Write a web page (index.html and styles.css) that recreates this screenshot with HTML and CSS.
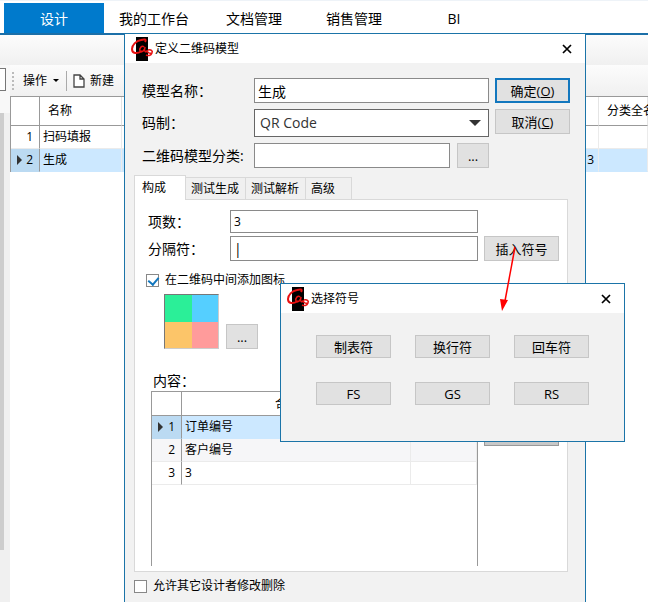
FILE: index.html
```html
<!DOCTYPE html>
<html lang="zh-CN">
<head>
  <meta charset="UTF-8" />
  <meta name="viewport" content="width=device-width, initial-scale=1.0"/>
  <title>定义二维码模型</title>
  <link rel="stylesheet" href="styles.css">
</head>
<body>
  <svg width="0" height="0" class="sprite">
    <symbol id="logo" viewBox="0 0 24 24">
      <rect x="6" y="0" width="12" height="24" fill="#000"/>
      <path d="M15 5C17 2 14 2 11 3C6 4 2 8 2 12C2 17 7 17 12 14" fill="none" stroke="#e81010" stroke-width="2"/>
      <path d="M14 10C12 8 9 11 10 14C12 16 15 13 15 10C14 14 15 16 18 14" fill="none" stroke="#e81010" stroke-width="1.5"/>
      <path d="M18 13C21 12 23 14 22 16C21 19 18 19 16 18M17 13C17 15 19 17 22 16" fill="none" stroke="#e81010" stroke-width="1.5"/>
    </symbol>
    <symbol id="close" viewBox="0 0 10 10">
      <path d="M1 1L9 9M9 1L1 9" fill="none" stroke="#000" stroke-width="1.7"/>
    </symbol>
  </svg>

  <div class="app">
    <nav class="nav">
      <a href="#" class="active">设计</a>
      <a href="#">我的工作台</a>
      <a href="#">文档管理</a>
      <a href="#">销售管理</a>
      <a href="#">BI</a>
    </nav>
    <div class="strip"></div>

    <div class="main">
      <aside class="side">
        <div class="side-top"><div class="side-box"></div></div>
        <div class="scroll"><div class="thumb"></div></div>
      </aside>
      <section class="content">
        <div class="toolbar">
          <span class="grip"></span>
          <button class="tool">操作 <span class="caret"></span></button>
          <span class="sep"></span>
          <button class="tool">
            <svg width="12" height="14" viewBox="0 0 12 14"><path d="M1 1H7L11 5V13H1ZM7 1V5H11" fill="#fff" stroke="#444" stroke-width="1.3"/></svg>
            新建
          </button>
        </div>
        <table class="grid list">
          <colgroup><col class="c-num"><col class="c-name"><col class="c-mid"><col class="c-last"></colgroup>
          <thead>
            <tr><th></th><th>名称</th><th></th><th>分类全名</th></tr>
          </thead>
          <tbody>
            <tr><td class="num">1</td><td>扫码填报</td><td></td><td></td></tr>
            <tr class="selected"><td class="num"><span class="marker"></span>2</td><td>生成</td><td class="right">3</td><td></td></tr>
          </tbody>
        </table>
      </section>
    </div>

    <div class="window model">
      <div class="titlebar">
        <svg class="logo"><use href="#logo"/></svg>
        <span>定义二维码模型</span>
        <button class="close" aria-label="关闭"><svg width="10" height="10"><use href="#close"/></svg></button>
      </div>

      <div class="form">
        <label for="name">模型名称：</label>
        <input type="text" id="name" value="生成" />
        <button class="btn primary">确定(<u>O</u>)</button>

        <label for="code" class="tall">码制：</label>
        <div class="select">
          <select id="code"><option>QR Code</option></select>
        </div>
        <button class="btn">取消(<u>C</u>)</button>

        <label for="category">二维码模型分类:</label>
        <div class="browse">
          <input type="text" id="category" />
          <button class="btn small">...</button>
        </div>
      </div>

      <div class="tabs">
        <button class="tab current">构成</button>
        <button class="tab">测试生成</button>
        <button class="tab">测试解析</button>
        <button class="tab">高级</button>
      </div>

      <div class="panel">
        <div class="fields">
          <label for="count" class="short">项数：</label>
          <input type="text" id="count" value="3" />
          <span></span>
          <label for="separator">分隔符：</label>
          <input type="text" id="separator" value="|" />
          <button class="btn">插入符号</button>
        </div>

        <label class="check"><input type="checkbox" checked /> 在二维码中间添加图标</label>

        <div class="picture">
          <div class="swatches">
            <span class="green"></span><span class="blue"></span>
            <span class="orange"></span><span class="pink"></span>
          </div>
          <button class="btn small">...</button>
        </div>

        <div class="caption">内容：</div>
        <div class="items">
          <div class="items-box">
            <table class="grid">
              <colgroup><col class="c-index"><col><col class="c-extra"></colgroup>
              <thead>
                <tr><th></th><th class="compose">合</th><th></th></tr>
              </thead>
              <tbody>
                <tr class="selected"><td class="num"><span class="marker"></span>1</td><td>订单编号</td><td></td></tr>
                <tr class="alt"><td class="num">2</td><td>客户编号</td><td></td></tr>
                <tr><td class="num">3</td><td>3</td><td></td></tr>
              </tbody>
            </table>
          </div>
          <button class="btn dark" disabled aria-label="项"></button>
        </div>
      </div>

      <label class="check share"><input type="checkbox" /> 允许其它设计者修改删除</label>
    </div>

    <div class="window symbols">
      <div class="titlebar">
        <svg class="logo"><use href="#logo"/></svg>
        <span>选择符号</span>
        <button class="close" aria-label="关闭"><svg width="10" height="10"><use href="#close"/></svg></button>
      </div>
      <div class="keys">
        <button class="btn">制表符</button>
        <button class="btn">换行符</button>
        <button class="btn">回车符</button>
        <button class="btn">FS</button>
        <button class="btn">GS</button>
        <button class="btn">RS</button>
      </div>
    </div>

    <svg class="arrow" width="20" height="66" viewBox="0 0 20 66">
      <path d="M15 1L5 55" stroke="#f00" stroke-width="1.5"/>
      <path d="M0 53L8 54L2 65Z" fill="#f00"/>
    </svg>
  </div>
</body>
</html>
```
FILE: styles.css
```css
* {
  box-sizing: border-box;
}
body {
  margin: 0;
  font-family: "Open Sans", "Noto Sans CJK SC", sans-serif;
  font-size: 12px;
  line-height: 16px;
  color: #000;
  background: #fff;
}
button, input, select {
  font: inherit;
  color: inherit;
  margin: 0;
}
.sprite {
  position: absolute;
}
.app {
  position: relative;
  min-height: 100vh;
  overflow: hidden;
  display: flex;
  flex-direction: column;
}

/* top navigation */
.nav {
  display: flex;
  height: 35px;
  padding: 2px 4px 0;
  border-top: 1px solid #eef3f8;
  border-bottom: 2px solid #1b6fa8;
}
.nav a {
  width: 100px;
  font-size: 14px;
  line-height: 31px;
  text-align: center;
  color: #000;
  text-decoration: none;
}
.nav .active {
  background: #007acc;
  color: #fff;
}
.strip {
  height: 30px;
  background: linear-gradient(#fcfcfc, #f0f0f0);
}

/* page behind the windows */
.main {
  display: flex;
  flex: 1;
}
.side {
  width: 10px;
  display: flex;
  flex-direction: column;
  background: #f0f0f0;
}
.side-top {
  height: 48px;
  padding-top: 3px;
  background: #f8f8f8;
}
.side-box {
  width: 6px;
  height: 23px;
  background: #fff;
  border: 1px solid #777;
  border-left: none;
}
.scroll {
  flex: 1;
  padding-bottom: 52px;
  display: flex;
}
.thumb {
  width: 4px;
  background: #cdcdcd;
}
.content {
  flex: 1;
  min-width: 0;
  overflow: hidden;
}
.toolbar {
  display: flex;
  align-items: center;
  height: 31px;
  padding-left: 2px;
  background: linear-gradient(#fcfcfc, #f0f0f0);
}
.grip {
  height: 18px;
  border-left: 2px dotted #bbb;
}
.tool {
  display: flex;
  align-items: center;
  gap: 6px;
  padding: 0 7px 0 9px;
  border: none;
  background: none;
}
.sep {
  height: 20px;
  border-left: 1px solid #aaa;
}
.sep + .tool {
  gap: 5px;
  padding-left: 6px;
}
.caret {
  border: 3px solid transparent;
  border-top-color: #000;
  border-bottom: none;
}

/* data tables */
.grid {
  width: 100%;
  table-layout: fixed;
  border-collapse: separate;
  border-spacing: 0;
}
.grid th {
  height: 24px;
  padding: 0 0 0 8px;
  font-weight: normal;
  text-align: left;
  white-space: nowrap;
  border-bottom: 1px solid #999;
  border-right: 1px solid #e4e4e4;
}
.grid td {
  height: 23px;
  padding: 0 4px 0 3px;
  border-bottom: 1px solid #ebebeb;
  border-right: 1px solid #ebebeb;
}
.grid th:first-child,
.grid .num {
  border-right: 1px solid #999;
}
.grid .num {
  position: relative;
  padding-right: 6px;
  text-align: right;
}
.grid .right {
  text-align: right;
}
.grid .selected td {
  background: #cce8ff;
  border-bottom-color: #cce8ff;
}
.grid .selected .num {
  background: #bbdaf2;
  border-bottom-color: #bbdaf2;
}
.alt td {
  background: #f6f6f8;
}
.marker {
  position: absolute;
  left: 6px;
  top: 6px;
  border: 5px solid transparent;
  border-left-color: #333;
  border-right: none;
}
.list {
  border-top: 1px solid #999;
  border-left: 1px solid #999;
}
.list th {
  height: 29px;
}
.c-num {
  width: 29px;
}
.c-index {
  width: 30px;
}
.c-name {
  width: 82px;
}
.c-mid {
  width: 477px;
}
.c-extra {
  width: 66px;
}

/* windows */
.window {
  position: absolute;
  background: #f2f2f2;
  border: 1px solid #1b74a8;
}
.model {
  left: 124px;
  top: 33px;
  bottom: 0;
  width: 462px;
  border-bottom: none;
}
.symbols {
  left: 280px;
  top: 283px;
  width: 345px;
}
.titlebar {
  display: flex;
  align-items: center;
  height: 29px;
  padding: 0 13px 0 5px;
  background: #fff;
}
.logo {
  width: 24px;
  height: 24px;
  margin-right: 1px;
}
.close {
  display: flex;
  margin-left: auto;
  padding: 0;
  border: none;
  background: none;
}
.btn {
  width: 75px;
  height: 25px;
  padding: 0;
  font-size: 13px;
  background: #e1e1e1;
  border: 1px solid #c6c6c6;
}
.primary {
  border: 2px solid #1277be;
}
.small {
  width: 32px;
}
.dark {
  background: #c8c8c8;
  border-color: #999;
}
.window input[type="text"],
.select select {
  width: 100%;
  height: 25px;
  padding: 0 3px;
  font-size: 14px;
  background: #fff;
  border: 1px solid #8a8a8a;
  border-radius: 0;
}
.form {
  display: grid;
  grid-template-columns: 106px 1fr 75px;
  gap: 6px;
  padding: 15px 15px 7px 17px;
}
.form label,
.fields label {
  font-size: 14px;
  line-height: 25px;
  white-space: nowrap;
}
.form .tall {
  line-height: 28px;
}
.fields .short {
  line-height: 23px;
}
.select {
  position: relative;
}
.select select {
  display: block;
  height: 28px;
  padding: 0 5px;
  color: #333;
  border-color: #666;
  appearance: none;
}
.select::after {
  content: "";
  position: absolute;
  right: 8px;
  top: 11px;
  border: 6px solid transparent;
  border-top-color: #333;
  border-bottom: none;
  pointer-events: none;
}
.browse {
  display: flex;
  gap: 7px;
}
.browse input {
  flex: 1;
  min-width: 0;
}
.tabs {
  display: flex;
  align-items: flex-end;
  height: 24px;
  padding-left: 9px;
}
.tab {
  height: 22px;
  padding: 0 6px 0 5px;
  background: #f0f0f0;
  border: 1px solid #d9d9d9;
  border-left: none;
  border-bottom: none;
}
.tab:last-child {
  padding-right: 16px;
}
.tab.current {
  position: relative;
  height: 25px;
  margin-bottom: -1px;
  padding: 0 19px 0 7px;
  background: #fff;
  border-left: 1px solid #d9d9d9;
}
.panel {
  margin: 0 17px 0 9px;
  padding: 10px 8px 5px 13px;
  background: #fff;
  border: 1px solid #d9d9d9;
}
.fields {
  display: grid;
  grid-template-columns: 76px 1fr 75px;
  gap: 3px 6px;
}
.window #count {
  height: 23px;
  font-size: 12px;
}
.check {
  display: flex;
  align-items: center;
  gap: 6px;
}
.check input {
  appearance: none;
  position: relative;
  width: 13px;
  height: 13px;
  background: #fff;
  border: 1px solid #888;
}
.check input:checked::after {
  content: "";
  position: absolute;
  left: 3px;
  top: 0;
  width: 5px;
  height: 8px;
  border: solid #1277be;
  border-width: 0 2px 2px 0;
  transform: rotate(40deg);
}
.panel .check {
  margin: 11px 0 6px -2px;
}
.picture {
  display: flex;
  align-items: flex-end;
  gap: 7px;
  padding-left: 16px;
}
.swatches {
  display: grid;
  grid-template-columns: 1fr 1fr;
  width: 55px;
  height: 55px;
  border: 1px solid #ccc;
  border-top-color: #777;
  border-left-color: #777;
}
.green {
  background: #2bef98;
}
.blue {
  background: #55cfff;
}
.orange {
  background: #fcc569;
}
.pink {
  background: #ff9b9b;
}
.caption {
  padding: 24px 0 2px 5px;
  font-size: 14px;
}
.items {
  display: flex;
  gap: 6px;
  padding-left: 3px;
}
.items-box {
  flex: 1;
  height: 175px;
  border: 1px solid #999;
  border-bottom: none;
}
.grid .compose {
  padding-left: 93px;
}
.items .btn {
  margin-top: 30px;
}
.share {
  margin: 6px 9px;
}
.keys {
  display: grid;
  grid-template-columns: repeat(3, 75px);
  justify-content: center;
  gap: 24px;
  padding: 22px 0 36px;
}
.keys .btn {
  height: 23px;
}
.arrow {
  position: absolute;
  left: 500px;
  top: 246px;
}
```
